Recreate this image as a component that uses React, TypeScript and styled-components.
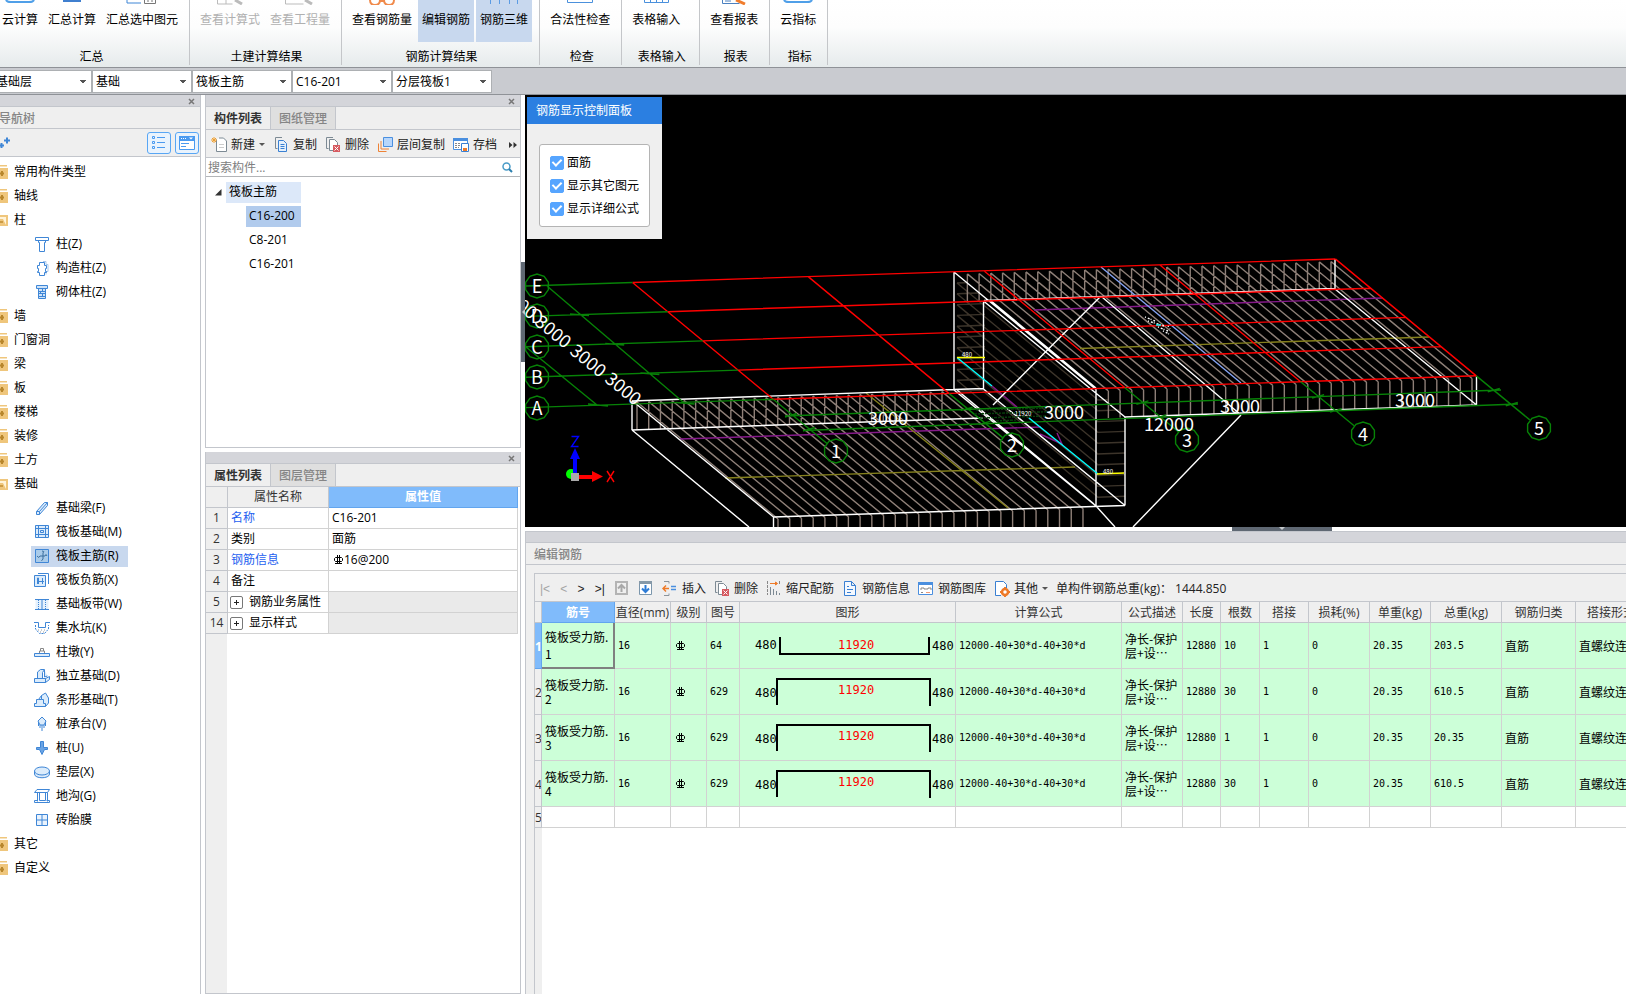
import React, { ReactNode, useState } from 'react';
import styled, { createGlobalStyle, css } from 'styled-components';

const UI_FONT = "'Open Sans', 'Noto Sans CJK SC', sans-serif";
const GRID_FONT = "'DejaVu Sans Mono', 'Noto Sans CJK SC', monospace";
const LINE = '#c3c6cc';
const PANEL = '#efefef';
const BLUE = '#3f86d6';

const GlobalStyle = createGlobalStyle`
  * { box-sizing: border-box; }
  body { margin: 0; background: #fff; font: 12px/16px ${UI_FONT}; color: #000; overflow-x: hidden; }
  button, select, input { font: inherit; color: inherit; }
  button { border: 0; padding: 0; background: none; white-space: nowrap; }
  ul { list-style: none; margin: 0; padding: 0; }
  svg { display: block; flex: none; }
`;

/* ---------- page frame ---------- */

const Page = styled.div`
  min-height: 100vh;
  display: flex;
  flex-direction: column;
  overflow: hidden;
`;
const Workspace = styled.main`
  flex: 1;
  display: flex;
`;

/* ---------- ribbon ---------- */

const Ribbon = styled.header`
  display: flex;
  height: 68px;
  padding-bottom: 2px;
  border-bottom: 1px solid #8f9297;
  background: linear-gradient(#fff 0%, #fdfdfd 40%, #e6ebec 100%);
  overflow: hidden;
`;
const RibbonGroups = styled.div`
  display: flex;
  margin-left: -8px;
`;
const RibbonGroup = styled.section<{ $min?: number }>`
  display: flex;
  flex-direction: column;
  padding: 0 6px 0 5px;
  min-width: ${(p) => (p.$min ? p.$min + 'px' : '0')};
  border-right: 1px solid #c4c6c9;
`;
const RibbonItems = styled.div`
  display: flex;
  flex: none;
  height: 42px;
`;
const RibbonLabel = styled.div`
  margin-top: 7px;
  padding-left: 3px;
  text-align: center;
`;
const RibbonButton = styled.button<{ $active?: boolean }>`
  display: flex;
  flex-direction: column;
  align-items: center;
  padding: 0 5px;
  color: #000;
  &:disabled { color: #b0b0b0; }
  svg { margin-bottom: 7px; }
  ${(p) => p.$active && css`
    padding: 0 4px;
    margin: 0 1px;
    background: #c8d8ee;
  `}
`;

const ribbonArt: Record<string, ReactNode> = {
  cloud: <path d="M6 0q1 2 5 2h18q4 0 5-2" fill="none" stroke="#4f9fe8" strokeWidth="2" />,
  sum: <path d="M11 0h18v2H11z" fill="#3f7fcf" />,
  pick: <><path d="M5 0v3h14" fill="none" stroke={BLUE} /><path d="M22.500 0v3.500h11V0M25 1h2m2 0h2" fill="none" stroke="#777" /></>,
  lookTable: <><path d="M7.500 0v4h15M16 0v4" fill="none" stroke="#bbb" /><path d="M25 0l7 4" stroke="#bbb" strokeWidth="3" /></>,
  lookArea: <><path d="M5.500 0v4h18" fill="none" stroke="#bbb" /><path d="M25 0l7 4" stroke="#bbb" strokeWidth="3" /></>,
  glasses: <path d="M8 0q0 5 5 5t5-5M22 0q0 5 5 5t5-5M18 1h4" fill="none" stroke="#f08a4b" strokeWidth="2" />,
  edit: null,
  bars: <path d="M6.500 0v4M15.500 0v4M25.500 0v4M33.500 0v4" stroke="#5a9be4" />,
  check: <path d="M7.500 0v2.500h25V0" fill="none" stroke="#4a90dc" />,
  grid: <path d="M8.500 0v2.500h24V0M14.500 0v2M20.500 0v2M26.500 0v2" fill="none" stroke="#4a90dc" strokeWidth="1" />,
  report: <><path d="M8.500 0v3.500h17M11 1h6" fill="none" stroke="#4a80c0" /><path d="M22 0l9 4" stroke="#f07c2c" strokeWidth="3" /></>,
};
const RibbonArt = ({ kind }: { kind: string }) => (
  <svg width="36" height="5" viewBox="2 0 36 5" aria-hidden="true">{ribbonArt[kind]}</svg>
);

type RibbonItem = { text: string; art: string; active?: boolean; disabled?: boolean };
const ribbon: { label: string; min?: number; items: RibbonItem[] }[] = [
  { label: '汇总', items: [{ text: '云计算', art: 'cloud' }, { text: '汇总计算', art: 'sum' }, { text: '汇总选中图元', art: 'pick' }] },
  { label: '土建计算结果', items: [{ text: '查看计算式', art: 'lookTable', disabled: true }, { text: '查看工程量', art: 'lookArea', disabled: true }] },
  { label: '钢筋计算结果', items: [{ text: '查看钢筋量', art: 'glasses' }, { text: '编辑钢筋', art: 'edit', active: true }, { text: '钢筋三维', art: 'bars', active: true }] },
  { label: '检查', items: [{ text: '合法性检查', art: 'check' }] },
  { label: '表格输入', min: 78, items: [{ text: '表格输入', art: 'grid' }] },
  { label: '报表', items: [{ text: '查看报表', art: 'report' }] },
  { label: '指标', items: [{ text: '云指标', art: 'cloud' }] },
];

/* ---------- selector bar ---------- */

const SelectorBar = styled.div`
  display: flex;
  height: 27px;
  padding-top: 2px;
  border-bottom: 1px solid #8f9297;
  background: #c9cbd0;
`;
const Selectors = styled.div`
  display: flex;
  margin-left: -8px;
`;
const Selector = styled.select`
  appearance: none;
  width: 100px;
  height: 23px;
  padding: 0 18px 0 3px;
  border: 1px solid #adb0b3;
  border-radius: 0;
  background:
    linear-gradient(to bottom right, #555 50%, transparent 51%) right 5px top 9px / 3px 3px no-repeat,
    linear-gradient(to bottom left, #555 50%, transparent 51%) right 8px top 9px / 3px 3px no-repeat,
    #fff;
`;

/* ---------- dock panels ---------- */

const Dock = styled.section<{ $width?: number; $grow?: boolean }>`
  display: flex;
  flex-direction: column;
  flex: ${(p) => (p.$grow ? '1' : 'none')};
  width: ${(p) => (p.$width ? p.$width + 'px' : 'auto')};
  min-width: 0;
`;
const NavDock = styled(Dock)`
  border-right: 1px solid ${LINE};
  margin-right: 4px;
`;
const MidColumn = styled.div`
  display: flex;
  flex-direction: column;
  gap: 4px;
  width: 316px;
  flex: none;
`;
const MidDock = styled(Dock)`
  border: 1px solid ${LINE};
  border-top: 0;
  background: #fff;
`;
const Strip = styled.div`
  display: flex;
  justify-content: flex-end;
  align-items: flex-end;
  flex: none;
  height: 12px;
  padding: 0 5px 1px 0;
  border-bottom: 1px solid ${LINE};
  background: #d4d5da;
`;
const CloseButton = styled.button`
  width: 7px;
  height: 7px;
`;
const StripWithClose = () => (
  <Strip>
    <CloseButton aria-label="关闭">
      <svg width="7" height="7" viewBox="0 0 7 7"><path d="M1 1l5 5M6 1L1 6" stroke="#777" strokeWidth="1.500" /></svg>
    </CloseButton>
  </Strip>
);
const DockTitle = styled.h2<{ $inset?: boolean }>`
  flex: none;
  height: 22px;
  margin: 0;
  padding-left: ${(p) => (p.$inset ? '8px' : '0')};
  border-bottom: 1px solid ${LINE};
  background: ${PANEL};
  color: #858585;
  font-size: 12px;
  font-weight: 500;
  line-height: 23px;
`;
const NavTitle = styled(DockTitle)`
  text-indent: -1px;
`;
const Tabs = styled.div`
  display: flex;
  flex: none;
  height: 23px;
  border-bottom: 1px solid ${LINE};
  background: ${PANEL};
`;
const Tab = styled.button<{ $active?: boolean }>`
  width: 65px;
  padding-top: 2px;
  border-right: 1px solid ${LINE};
  background: ${(p) => (p.$active ? PANEL : '#dfdfdf')};
  color: ${(p) => (p.$active ? '#333' : '#858585')};
  font-weight: ${(p) => (p.$active ? 700 : 500)};
`;
const ToolRow = styled.div`
  display: flex;
  align-items: center;
  flex: none;
  height: 28px;
  border-bottom: 1px solid ${LINE};
  background: ${PANEL};
  color: #222;
`;

/* ---------- navigation tree ---------- */

const NavTools = styled(ToolRow)`
  justify-content: flex-end;
  gap: 4px;
  padding-right: 1px;
`;
const AddMark = styled.button`
  margin-right: auto;
`;
const ViewToggle = styled.button`
  display: grid;
  place-items: center;
  width: 24px;
  height: 22px;
  border: 1px solid #58a6f4;
  border-radius: 3px;
  background: #e9f3fd;
`;
const NavTree = styled.ul`
  padding-top: 3px;
  margin-left: -8px;
`;
const NavRow = styled.li`
  display: flex;
  align-items: center;
  height: 24px;
`;
const NavGroup = styled.button`
  display: flex;
  align-items: center;
  gap: 6px;
`;
const NavItem = styled.button<{ $selected?: boolean }>`
  display: flex;
  align-items: center;
  gap: 6px;
  height: 21px;
  margin-left: 39px;
  padding: 0 9px 0 3px;
  background: ${(p) => (p.$selected ? '#c8d8ee' : 'transparent')};
`;

const Folder = ({ open }: { open?: boolean }) => (
  <svg width="16" height="16" viewBox="0 0 16 16" aria-hidden="true">
    {open ? (
      <><path d="M1 3h16v11H1z" fill="#efc67c" /><path d="M2 5h12v8l-3-6H2z" fill="#fff3d8" /><path d="M1 7h9l4 7H1z" fill="#efc67c" /><path d="M6 10h5" stroke="#c08c30" strokeWidth="1.500" /></>
    ) : (
      <><path d="M8 1h7v1.500H8z" fill="#efc67c" /><path d="M1 4h15v11H1z" fill="#efc67c" /><path d="M8 9.500h4M10 7v5" stroke="#b8862c" strokeWidth="2" /></>
    )}
  </svg>
);

const partArt: Record<string, ReactNode> = {
  column: <path d="M1.500 1.500h13v3h-3v2h-1v9h-5v-9h-1v-2h-3zM4 4.500h8" />,
  ringColumn: <><path d="M9 1.500h3v3h2v7h-2v3" stroke="#a9c8ec" /><path d="M5.500 2.500h5v3h2v3h-1v3h1v1h-2v3h-5v-3h-2v-1h1v-3h-1v-3h2z" /></>,
  brickColumn: <><path d="M4.500 4.500h7v10h-7z" fill="#cfe3f8" /><path d="M2.500 1.500h11v3h-11z" fill="#cfe3f8" /><path d="M5 7.500h6M5 9.500h6M5 12.500h6M8.500 5v2M6.500 8v1M8.500 10v2" /></>,
  beam: <><path d="M2.500 11.500l8-9h3v3l-8 9h-3z" fill="#dcecfb" /><path d="M2.500 11.500h3v3M5.500 11.500l8-9" /></>,
  raft: <path d="M1.500 1.500h13v12h-13zM4.500 1.500v12M11.500 1.500v12M1.500 4.500h13M1.500 10.500h13M6.500 6.500h3v2h-3z" fill="#dcecfb" />,
  mainBar: <><path d="M1.500 1.500h13v13h-13z" fill="#a9cbea" /><path d="M3 8q2 3 3 0h5q1-3 2 0M8 3q3 0 1 2v6q-2 2-1 2" stroke="#3b6f9e" /></>,
  negBar: <><path d="M4 1.500h10.500V12" /><path d="M.5 3.500h11v11H.5z" fill="#dcecfb" /><path d="M3.500 12V6h1v6M8.500 12V6M3 9.500h7" /></>,
  strip: <><path d="M1.500 3v11h13V3" fill="#e4f0fc" stroke="none" /><path d="M1 3.500h14M1 13.500h14M8 3v11" /><path d="M4.500 4v9M11.500 4v9" strokeDasharray="1 1" /></>,
  pit: <><path d="M0 2.500h4.500v5h7v-5H16" /><path d="M1.500 5v4l4 4.500h5l4-4.500V5" strokeDasharray="2 1" /><path d="M4 10h8M6 12h4" stroke="#999" strokeDasharray="1 2" /></>,
  pier: <><path d="M.5 9.500h15v3H.5z" fill="#dcecfb" /><path d="M5.500 9V7h5v2M6.500 7V4.500h3V7" stroke="#888" /></>,
  pad: <><path d="M.5 10.500h11v4H.5zM3.500 10.500V4l3-2.500h4l-2 3V10M11.500 10.500l4-2v3l-4 3zM10.500 2v7l3-1" fill="#dcecfb" /></>,
  stripPad: <><path d="M.5 14.500v-3h2v-4h2l3-4 4-2.500 3 5v5l-3 3.500z" fill="#dcecfb" /><path d="M7.500 3.500v4h2v4h2v3M4.500 7.500h3" /></>,
  cap: <path d="M8 1l4 4-2 4H6L4 5zM4.500 6v4M8 9v6M11.500 6v4M6 9v3M10 9v3" fill="#dcecfb" />,
  pile: <path d="M6.500 1.500h3v6h4v2h-3l-2.500 5-2.500-5h-3v-2h4z" fill="#6ba4e4" />,
  cushion: <><path d="M.5 7v3c0 5 15 5 15 0V7" fill="#dcecfb" /><ellipse cx="8" cy="7" rx="7.500" ry="4" fill="#dcecfb" /></>,
  trench: <path d="M3 1.500h12.500l-2 3H.5l2.500-3M3.500 4.500v9M5.500 4.500v8h6v-8M13.500 4.500v9M.5 14.500h15v-2h-3M.5 14.500v-2h3" />,
  brickMold: <path d="M2.500 2.500h11v11h-11zM8 2.500v11M2.500 8h11" fill="#eaf3fd" />,
};
const PartIcon = ({ kind }: { kind: string }) => (
  <svg width="16" height="16" viewBox="0 0 16 16" fill="none" stroke={BLUE} aria-hidden="true">{partArt[kind]}</svg>
);

type NavEntry = { name: string; open?: boolean; items?: [string, string][] };
const navigation: NavEntry[] = [
  { name: '常用构件类型' },
  { name: '轴线' },
  { name: '柱', open: true, items: [['柱(Z)', 'column'], ['构造柱(Z)', 'ringColumn'], ['砌体柱(Z)', 'brickColumn']] },
  { name: '墙' },
  { name: '门窗洞' },
  { name: '梁' },
  { name: '板' },
  { name: '楼梯' },
  { name: '装修' },
  { name: '土方' },
  {
    name: '基础', open: true, items: [
      ['基础梁(F)', 'beam'], ['筏板基础(M)', 'raft'], ['筏板主筋(R)', 'mainBar'], ['筏板负筋(X)', 'negBar'],
      ['基础板带(W)', 'strip'], ['集水坑(K)', 'pit'], ['柱墩(Y)', 'pier'], ['独立基础(D)', 'pad'],
      ['条形基础(T)', 'stripPad'], ['桩承台(V)', 'cap'], ['桩(U)', 'pile'], ['垫层(X)', 'cushion'],
      ['地沟(G)', 'trench'], ['砖胎膜', 'brickMold'],
    ],
  },
  { name: '其它' },
  { name: '自定义' },
];

/* ---------- tool icons ---------- */

const toolArt: Record<string, ReactNode> = {
  create: <><path d="M5.500 3.500V15.500h10V5l-3-3H8" stroke="#7d8a94" fill="#fff" /><path d="M8 8.500h5M8 11.500h5" stroke="#ccc" /><path d="M1 2l4 4M5 2L1 6M3 1v6M0 4h6" stroke="#f0a030" /></>,
  copy: <><path d="M9 1.500H2.500v11h2" stroke="#7d8a94" /><path d="M5.500 4.500h5l3 3v8h-8zM7.500 8.500h4M7.500 10.500h4M7.500 12.500h4" stroke="#3a80d2" fill="#e6f1fc" /></>,
  remove: <><path d="M8 1.500H1.500v11h2" stroke="#7d8a94" /><path d="M4.500 3.500h5l3 3v8h-8z" stroke="#7d8a94" fill="#fff" /><path d="M8 9h7v7H8z" fill="#d65a60" stroke="none" /><path d="M9.500 10.500l4 4M13.500 10.500l-4 4" stroke="#fff" /></>,
  layer: <><path d="M6.500 1.500h9v9h-9z" fill="#b7d6fb" stroke="#4a8fdf" /><path d="M4 5v8h8M1.500 7.500v8h8" stroke="#ee8236" /></>,
  archive: <><path d="M.5 2.500h14v11H.5z" stroke="#4a8fdf" fill="#fff" /><path d="M0 2h15v3H0z" fill="#4a8fdf" stroke="none" /><path d="M2 7.500h5M2 9.500h5M2 11.500h4" stroke="#888" strokeDasharray="2 1" /><path d="M8.500 7.500h7v8h-7z" stroke="#3a80d2" fill="#fff" /><path d="M10 12h4v3h-4z" fill="#ee7a28" stroke="none" /></>,
  moveUp: <><path d="M1 1h13v14H1z" fill="#b4b4b4" stroke="none" /><path d="M3 3h9v10H3z" fill="#efefef" stroke="none" /><path d="M7.500 12V5M4 8.500L7.500 5 11 8.500" stroke="#a8a8a8" strokeWidth="2" /></>,
  moveDown: <><path d="M1.500 1.500h12v13h-12z" stroke="#7b96ac" fill="#fff" /><path d="M1 1h13v3H1z" fill="#8699a8" stroke="none" /><path d="M7.500 5v7M4 8.500L7.500 12 11 8.500" stroke="#2d7cd6" strokeWidth="2" /></>,
  insert: <><path d="M2 1.500h5v2M2 15.500h5v-2" stroke="#8a949c" /><path d="M7 8.500H1M4 5.500l-3 3 3 3" stroke="#ee7a28" strokeWidth="1.500" /><path d="M9 6.500h5M9 9.500h5" stroke="#4a8fdf" strokeWidth="1.500" /></>,
  scale: <><path d="M4 3.500h6M9.500 2v3l2-1.500z" stroke="#ee7a28" fill="#ee7a28" /><path d="M1.500 1v14M13.500 1v3" stroke="#888" strokeDasharray="3 1" /><path d="M4.500 7v8M7.500 9v6M10.500 11v4M13.500 13v2" stroke="#7d8a94" /></>,
  info: <path d="M2.500 1.500h7l4 4v10h-11zM9.500 1.500v4h4M5 6.500h2M5 9.500h6M5 12.500h4" stroke="#3a80d2" fill="#f4f9ff" />,
  library: <><path d="M.5 2.500h14v12H.5z" stroke="#4a8fdf" fill="#fff" /><path d="M0 2h15v3H0z" fill="#4a8fdf" stroke="none" /><path d="M3 10V8h3v1h4V8h3v2M3 12.500h2" stroke="#888" /><path d="M8 12.500h4" stroke="#ee9a78" /></>,
  other: <><path d="M7 15.500H1.500v-14h8l3 3V8" stroke="#3a80d2" fill="#fff" /><circle cx="11" cy="12" r="3" stroke="#ee7a28" strokeWidth="2.500" fill="#fff" /><path d="M11 7v2M11 15v2M6 12h2M14 12h2" stroke="#ee7a28" strokeWidth="2" /></>,
};
const ToolIcon = ({ kind }: { kind: string }) => (
  <svg width="16" height="17" viewBox="0 0 16 17" fill="none" aria-hidden="true">{toolArt[kind]}</svg>
);
const Caret = () => (
  <svg width="6" height="4" viewBox="0 0 6 4" aria-hidden="true"><path d="M0 0h6L3 3z" fill="#555" /></svg>
);
const ToolButton = styled.button`
  display: flex;
  align-items: center;
  gap: 4px;
  color: #222;
`;

/* ---------- component list ---------- */

const ListTools = styled(ToolRow)`
  gap: 8px;
  padding: 2px 3px 0 5px;
`;
const MoreButton = styled.button`
  margin-left: auto;
`;
const SearchRow = styled.label`
  display: flex;
  align-items: center;
  flex: none;
  height: 19px;
  padding: 0 7px 0 2px;
  border-bottom: 1px solid #b3b5b8;
`;
const SearchInput = styled.input`
  flex: 1;
  min-width: 0;
  height: 18px;
  padding: 0;
  border: 0;
  outline: 0;
  background: transparent;
  &::placeholder { color: #808080; opacity: 1; }
`;
const ComponentTree = styled.ul`
  height: 270px;
  padding-top: 3px;
`;
const ComponentRow = styled.li<{ $level: number }>`
  display: flex;
  align-items: center;
  height: 24px;
  padding-left: ${(p) => (p.$level ? '40px' : '9px')};
  gap: 4px;
`;
const ComponentName = styled.button<{ $tone?: string; $wide?: boolean }>`
  height: 21px;
  min-width: ${(p) => (p.$wide ? '75px' : '55px')};
  padding: 0 3px;
  text-align: left;
  background: ${(p) => p.$tone || 'transparent'};
`;

/* ---------- property table ---------- */

const PropertyArea = styled.div`
  flex: 1;
  background: linear-gradient(to right, ${PANEL} 21px, #fff 21px);
`;
const PropertyTable = styled.table`
  width: 312px;
  border-collapse: separate;
  border-spacing: 0;
  table-layout: fixed;
`;
const PropHead = styled.th<{ $current?: boolean }>`
  height: 21px;
  padding: 0;
  border-right: 1px solid ${LINE};
  border-bottom: 1px solid ${LINE};
  background: ${PANEL};
  color: #333;
  font-weight: 400;
  ${(p) => p.$current && css`
    border-color: #62a5ee;
    background: #80bbfb;
    color: #fff;
    font-weight: 700;
  `}
`;
const PropCell = styled.td<{ $link?: boolean; $shade?: boolean }>`
  height: 21px;
  padding: 0 3px;
  border-right: 1px solid #d2d2d2;
  border-bottom: 1px solid #d2d2d2;
  background: ${(p) => (p.$shade ? '#eaeaea' : '#fff')};
  color: ${(p) => (p.$link ? '#1e5ff0' : '#000')};
  white-space: nowrap;
`;
const Inline = styled.span`
  display: flex;
  align-items: center;
  gap: 6px;
`;
const RebarValue = styled(Inline)`
  gap: 1px;
  padding-left: 2px;
`;
const ExpandBox = styled.button`
  display: grid;
  place-items: center;
  width: 13px;
  height: 13px;
  margin-left: -1px;
  border: 1px solid #777;
  border-radius: 2px;
  background: #fff;
`;
const RebarMark = () => (
  <svg width="9" height="10" viewBox="0 0 9 10" fill="none" stroke="#000" role="img" aria-label="HRB400">
    <path d="M1.500 2.500h6l1 1v2l-1 1h-6l-1-1v-2zM3.500 0v9M5.500 0v9M1 8.500h7" />
  </svg>
);

/* ---------- splitters ---------- */

const ColumnSplitter = styled.div`
  flex: none;
  width: 4px;
  padding-top: 167px;
`;
const RowSplitter = styled.div`
  flex: none;
  height: 4px;
  padding-left: 707px;
`;
const ColumnGrip = styled.button`
  display: grid;
  place-items: center;
  width: 4px;
  height: 100px;
  background: #5f6873;
`;
const RowGrip = styled.button`
  display: grid;
  place-items: start center;
  width: 100px;
  height: 4px;
  background: #5f6873;
`;

/* ---------- 3D view ---------- */

const View = styled.div`
  position: relative;
  flex: none;
  height: 432px;
  background: #000;
  overflow: hidden;
`;
const ControlPanel = styled.form`
  position: absolute;
  left: 2px;
  top: 2px;
  width: 135px;
  padding-bottom: 12px;
  background: ${PANEL};
`;
const ControlTitle = styled.h2`
  margin: 0 0 20px;
  padding-left: 9px;
  background: #2b7fe1;
  color: #fff;
  font-size: 12px;
  font-weight: 400;
  line-height: 27px;
`;
const ControlBox = styled.div`
  margin: 0 12px;
  padding: 6px 0 6px 10px;
  border: 1px solid #b4b4b4;
  border-radius: 3px;
  background: #fff;
`;
const CheckLabel = styled.label`
  display: flex;
  align-items: center;
  gap: 3px;
  height: 23px;
  white-space: nowrap;
`;
const CheckInput = styled.input`
  appearance: none;
  display: grid;
  place-items: center;
  width: 14px;
  height: 14px;
  margin: 0;
  border: 1px solid #56a5ff;
  border-radius: 2px;
  &:checked { background: #56a5ff; }
  &:checked::before {
    content: '';
    width: 4px;
    height: 7px;
    margin-bottom: 2px;
    border: solid #fff;
    border-width: 0 2px 2px 0;
    rotate: 45deg;
  }
`;

type Seg = [number, number, number, number];
const toPath = (segs: Seg[]) => segs.map(([a, b, c, d]) => `M${a} ${b}L${c} ${d}`).join('');
const range = (n: number) => Array.from({ length: n }, (_, i) => i);

/* Projection of the 12 m x 12 m grid: one bay runs 176 px across and 35 px down-right. */
const PITCH = 11.73;
const SLOPE = -0.0341;
const DIAG: [number, number] = [141, 117];

const redLines: Seg[] = [
  ...range(5).map((i): Seg => [632.5 + 35.2 * i, 282.5 + 29.2 * i, 1335 + 35.4 * i, 259 + 29.2 * i]),
  ...range(5).map((i): Seg => [632.5 + 175.7 * i, 282.5 - 5.9 * i, 773.5 + 175.7 * i, 399.5 - 5.9 * i]),
];
const greenLines: Seg[] = [
  ...range(5).map((i): Seg => [526, 286 + 30.4 * i, 632.5 + 35.2 * i, 282.5 + 29.2 * i]),
  [547, 286, 683, 402], [526, 347, 597, 405],
  [785, 416, 1501, 390], [803, 430.5, 1518, 404],
  ...range(5).map((i): Seg => [773.5 + 175.7 * i, 399.5 - 5.9 * i, 827 + 175.7 * i, 443.5 - 5.9 * i]),
  ...range(5).map((i): Seg => [785 + 175.7 * i, 417 - 6.3 * i, 797 + 175.7 * i, 413.5 - 6.3 * i]),
  ...range(5).map((i): Seg => [803 + 175.7 * i, 431 - 6.3 * i, 815 + 175.7 * i, 427.5 - 6.3 * i]),
  ...range(4).map((i): Seg => [570 + 35.2 * i, 314 + 29.5 * i, 589 + 35.2 * i, 315.5 + 29.5 * i]),
  [588, 404, 608, 406],
];
const lowerBars: Seg[] = range(27).flatMap((k): Seg[] => {
  const x = 637 + PITCH * k;
  const y = 402 + SLOPE * PITCH * k;
  return [[x, y, x, y + 28], [x, y, x + DIAG[0], y + DIAG[1]], [x + DIAG[0], y + DIAG[1], x + DIAG[0], y + DIAG[1] + 29]];
});
const upperBars: Seg[] = range(32).flatMap((k): Seg[] => {
  const x = 1331 - PITCH * k;
  const y = 261.5 - SLOPE * PITCH * k;
  return [[x, y, x, y + 27], [x, y, x + DIAG[0], y + DIAG[1]], [x + DIAG[0], y + DIAG[1], x + DIAG[0], y + DIAG[1] + 27]];
});
const wallBars: Seg[] = range(11).flatMap((k): Seg[] => {
  const y = 283 + 10.8 * k;
  return [
    [957, y, 985, y - 1],
    [957, y, 957 + DIAG[0], y + DIAG[1]],
    [1097, y + DIAG[1], 1125, y + DIAG[1] - 1],
  ];
});
const outline: Seg[] = [
  [954, 272, 954, 389.5], [983.5, 301, 983.5, 389], [954, 389.5, 983.5, 388.5],
  [954, 272, 1096, 389.5], [983.5, 301, 1125, 417], [990, 300, 1096, 388],
  [984, 300.5, 1335, 288.5], [1335, 259, 1335, 289], [1335, 289, 1476.5, 405],
  [1476.5, 376, 1476.5, 405], [1125, 417, 1476.5, 405],
  [1096, 389, 1096, 506], [1125, 417, 1125, 505.5],
  [954, 390, 1096, 506], [957, 390, 1094, 504], [983.5, 389, 1125, 505.5], [1096, 506, 1115, 527],
  [632, 401, 954, 389.5], [632, 401, 632, 430], [632, 430, 983, 418], [632, 400.5, 773.5, 517],
  [632, 430, 749, 527], [773.5, 517, 1125, 505.5], [773.5, 517, 773.5, 527],
  [1100, 297, 993, 405], [1102, 297, 1241, 415], [1241, 415, 1133, 527],
];
const bubbles: [string, number, number][] = [
  ['E', 537, 286], ['D', 537, 316], ['C', 537, 347], ['B', 537, 377], ['A', 537, 408],
  ['1', 836, 451], ['2', 1012, 445], ['3', 1187, 440], ['4', 1363, 434], ['5', 1539, 428],
];
const decagon = (cx: number, cy: number) =>
  range(10).map((i) => {
    const a = (Math.PI / 5) * i + Math.PI / 10;
    return `${(cx + 12 * Math.cos(a)).toFixed(1)},${(cy + 12 * Math.sin(a)).toFixed(1)}`;
  }).join(' ');
const spans: [string, number, number, number][] = [
  ['3000', 519, 303, 39], ['3000', 553, 332, 39], ['3000', 588, 361, 39], ['3000', 623, 389, 39],
  ['3000', 888, 419, 0], ['3000', 1064, 413, 0], ['12000', 1169, 425, 0], ['3000', 1240, 407, 0], ['3000', 1415, 401, 0],
];

const Scene = styled.svg`
  width: 100%;
  height: 432px;
  fill: none;
  path, polygon { stroke-width: 1.4; }
  text {
    fill: #fff;
    font-family: 'Noto Sans CJK SC', sans-serif;
    font-weight: 400;
    text-anchor: middle;
  }
`;

const RaftScene = () => (
  <Scene role="img" aria-label="筏板钢筋三维视图">
    <defs>
      <clipPath id="wall"><path d="M954 272V390L1096 506H1126V416L1096 389Z" /></clipPath>
      <clipPath id="lower"><path d="M632 400L954 389L1096 505V527H632Z" /></clipPath>
    </defs>
    <g transform="translate(-525 -95)">
      <path d={toPath(wallBars)} stroke="#3c342a" clipPath="url(#wall)" />
      <path d={toPath(lowerBars)} stroke="#8e7f77" clipPath="url(#lower)" />
      <path d={toPath(upperBars)} stroke="#8e7f77" />
      <path d="M680 439L1041 427M1034 310L1383 298M992 386L1018 408M1040 434L1062 444L1057 433" stroke="#86198a" />
      <path d="M725 478L1075 467M1080 348.500L1429 337M866 393L1008 508" stroke="#85801c" />
      <path d={toPath(outline)} stroke="#fff" />
      <path d="M1101 267L1241 383" stroke="#86a4f4" />
      <path d={toPath(redLines)} stroke="#f00" />
      <path d={toPath(greenLines)} stroke="#078207" />
      <path d="M976 410l70-2M974 414l98-3M980 418l66-2M996 421l20-1" stroke="#07400c" strokeDasharray="3 1 2 1" />
      <path d="M957 357.500L992 386M1029 418L1098 474" stroke="#0ff" />
      <path d="M957 357.500h28M1097 474l27-1" stroke="#ff0" />
      <path d="M1145 317l10 4M1148 321l16 5M1158 327l10 4M1163 331l6 3M1168 326l2 3" stroke="#fff" strokeDasharray="1 2 2 1" />
      <path d="M1156 325h5" stroke="#0ff" />
      <text x="967" y="357" fontSize="6">480</text>
      <text x="1108" y="474" fontSize="6">480</text>
      <text x="1023" y="416" fontSize="6">11920</text>
      {bubbles.map(([name, x, y]) => (
        <g key={name}>
          <polygon points={decagon(x, y)} stroke="#078207" />
          <text x={x} y={y + 7} fontSize="18">{name}</text>
        </g>
      ))}
      {spans.map(([value, x, y, turn]) => (
        <text key={x} x={x} y={y + 6} fontSize="18" transform={`rotate(${turn} ${x} ${y})`}>{value}</text>
      ))}
      <circle cx="571" cy="474" r="5" fill="#0f0" />
      <path d="M573 458h4v16h-4zM575 448l5 11h-10z" fill="#00f" />
      <path d="M579 475h14v4h-14zM592 471l11 5.500-11 5.500z" fill="#f00" />
      <path d="M571 473h8v8h-8z" fill="#aaa" />
      <path d="M571.500 436.500h7l-7 10h7" stroke="#00f" />
      <path d="M607 471l7 11M614 471l-7 11" stroke="#f00" />
    </g>
  </Scene>
);

/* ---------- rebar editor ---------- */

const Editor = styled.section`
  display: flex;
  flex-direction: column;
  flex: 1;
  border-left: 1px solid ${LINE};
  border-top: 1px solid ${LINE};
  background: ${PANEL};
`;
const EditorStrip = styled(Strip)`
  height: 11px;
`;
const EditorFrame = styled.div`
  display: flex;
  flex-direction: column;
  flex: 1;
  margin: 8px 0 0 8px;
  border-left: 1px solid ${LINE};
  border-top: 1px solid ${LINE};
  overflow: hidden;
`;
const EditorTools = styled(ToolRow)`
  gap: 8px;
  padding: 2px 0 0 5px;
  white-space: nowrap;
`;
const Stepper = styled.div`
  display: flex;
  width: 65px;
  justify-content: space-between;
  margin-right: 1px;
`;
const StepButton = styled.button`
  color: #222;
  font-family: 'Liberation Sans', sans-serif;
  &:disabled { color: #a4a4a4; }
`;
const GridArea = styled.div`
  flex: 1;
  background: linear-gradient(to right, ${PANEL} 7px, #fff 7px);
`;
const GridTable = styled.table`
  width: 1112px;
  border-collapse: separate;
  border-spacing: 0;
  table-layout: fixed;
`;
const GridHead = styled(PropHead)`
  padding-top: 1px;
  line-height: 15px;
  white-space: nowrap;
  overflow: hidden;
`;
const Cell = styled.td<{ $filled?: boolean; $mixed?: boolean }>`
  height: ${(p) => (p.$filled ? '46px' : '21px')};
  padding: 0 0 0 3px;
  border-right: 1px solid #d2d2d2;
  border-bottom: 1px solid #d2d2d2;
  background: ${(p) => (p.$filled ? '#ccffd8' : '#fff')};
  font-family: ${(p) => (p.$mixed ? "'Noto Sans CJK SC', sans-serif" : GRID_FONT)};
  font-size: ${(p) => (p.$mixed ? '12px' : '10px')};
  line-height: 14px;
  white-space: nowrap;
  overflow: hidden;
`;
const CurrentCell = styled(Cell)`
  border-right: 2px solid #808080;
  border-bottom: 2px solid #808080;
  line-height: 17px;
`;
const MarkCell = styled(Cell)`
  padding-left: 5px;
`;
const DrawingCell = styled(Cell)`
  padding: 0;
  text {
    font-family: ${GRID_FONT};
    font-size: 12px;
  }
`;

const BarShape = ({ up }: { up: boolean }) => (
  <svg width="215" height="45" role="img" aria-label="钢筋图形">
    <path d={up ? 'M40 14V31H189V14' : 'M37 36V10H190V37'} fill="none" stroke="#000" strokeWidth="2" />
    <text x="15" y={up ? 26 : 28}>480</text>
    <text x="98" y={up ? 26 : 25} fill="#f00">11920</text>
    <text x="192" y={up ? 27 : 28}>480</text>
  </svg>
);

const columns: [string, number][] = [
  ['筋号', 73], ['直径(mm)', 56], ['级别', 36], ['图号', 33], ['图形', 216], ['计算公式', 166], ['公式描述', 61],
  ['长度', 38], ['根数', 39], ['搭接', 49], ['损耗(%)', 61], ['单重(kg)', 61], ['总重(kg)', 71], ['钢筋归类', 74], ['搭接形式', 71],
];
const bars = [
  { shape: '64', count: '10', total: '203.5' },
  { shape: '629', count: '30', total: '610.5' },
  { shape: '629', count: '1', total: '20.35' },
  { shape: '629', count: '30', total: '610.5' },
];

const properties: { no: number; name: string; value?: ReactNode; link?: boolean; group?: boolean }[] = [
  { no: 1, name: '名称', value: 'C16-201', link: true },
  { no: 2, name: '类别', value: '面筋' },
  { no: 3, name: '钢筋信息', value: <RebarValue><RebarMark />16@200</RebarValue>, link: true },
  { no: 4, name: '备注' },
  { no: 5, name: '钢筋业务属性', group: true },
  { no: 14, name: '显示样式', group: true },
];

export default function App() {
  const [part, setPart] = useState('筏板主筋(R)');
  return (
    <Page>
      <GlobalStyle />
      <Ribbon>
        <RibbonGroups>
          {ribbon.map((g) => (
            <RibbonGroup key={g.label} $min={g.min}>
              <RibbonItems>
                {g.items.map((it) => (
                  <RibbonButton key={it.text} $active={it.active} disabled={it.disabled}>
                    <RibbonArt kind={it.art} />
                    {it.text}
                  </RibbonButton>
                ))}
              </RibbonItems>
              <RibbonLabel>{g.label}</RibbonLabel>
            </RibbonGroup>
          ))}
        </RibbonGroups>
      </Ribbon>

      <SelectorBar>
        <Selectors>
          {[['楼层', '基础层'], ['类别', '基础'], ['构件类型', '筏板主筋'], ['构件', 'C16-201'], ['分层', '分层筏板1']].map(([label, v]) => (
            <Selector key={label} aria-label={label}><option>{v}</option></Selector>
          ))}
        </Selectors>
      </SelectorBar>

      <Workspace>
        <NavDock $width={201} as="nav">
          <StripWithClose />
          <NavTitle>导航树</NavTitle>
          <NavTools>
            <AddMark aria-label="添加">
              <svg width="11" height="12" viewBox="0 0 11 12"><path d="M0 8.500h4M1.500 6v5M4 3.500h6M7 .5v6" stroke={BLUE} strokeWidth="2" /></svg>
            </AddMark>
            <ViewToggle aria-label="列表视图">
              <svg width="14" height="14" viewBox="0 0 14 14" fill="none" stroke="#4a9af0"><path d="M.5.5h2v2h-2zM.5 5.500h2v2h-2zM.5 10.500h2v2h-2zM5 1.500h8M5 6.500h8M5 11.500h8" /></svg>
            </ViewToggle>
            <ViewToggle aria-label="图标视图">
              <svg width="16" height="14" viewBox="0 0 16 14" fill="none"><path d="M.5.500h15v13H.5z" stroke="#4a9af0" fill="#fff" /><path d="M0 0h16v5H0z" fill="#4a9af0" /><path d="M2 2.500h5" stroke="#fff" strokeDasharray="1 1" /><path d="M10 1.500h4l-2 2z" fill="#fff" /><path d="M2 7.500h8M2 10.500h5" stroke="#4a9af0" /></svg>
            </ViewToggle>
          </NavTools>
          <NavTree>
            {navigation.map((g) => (
              <React.Fragment key={g.name}>
                <NavRow><NavGroup><Folder open={g.open} />{g.name}</NavGroup></NavRow>
                {g.items?.map(([name, kind]) => (
                  <NavRow key={name}>
                    <NavItem $selected={name === part} onClick={() => setPart(name)}><PartIcon kind={kind} />{name}</NavItem>
                  </NavRow>
                ))}
              </React.Fragment>
            ))}
          </NavTree>
        </NavDock>

        <MidColumn>
          <MidDock>
            <StripWithClose />
            <Tabs><Tab $active>构件列表</Tab><Tab>图纸管理</Tab></Tabs>
            <ListTools>
              <ToolButton><ToolIcon kind="create" />新建<Caret /></ToolButton>
              <ToolButton><ToolIcon kind="copy" />复制</ToolButton>
              <ToolButton><ToolIcon kind="remove" />删除</ToolButton>
              <ToolButton><ToolIcon kind="layer" />层间复制</ToolButton>
              <ToolButton><ToolIcon kind="archive" />存档</ToolButton>
              <MoreButton aria-label="更多">
                <svg width="8" height="6" viewBox="0 0 8 6"><path d="M0 0l3.500 3L0 6zM4.500 0L8 3 4.500 6z" fill="#333" /></svg>
              </MoreButton>
            </ListTools>
            <SearchRow>
              <SearchInput placeholder="搜索构件..." aria-label="搜索构件" />
              <svg width="11" height="11" viewBox="0 0 11 11" fill="none"><circle cx="4.500" cy="4.500" r="3.500" stroke="#4a9cc8" strokeWidth="1.500" /><path d="M7 7l3 3" stroke="#2b7fae" strokeWidth="2" /></svg>
            </SearchRow>
            <ComponentTree>
              <ComponentRow $level={0}>
                <svg width="7" height="7" viewBox="0 0 7 7"><path d="M6.500 0v6.500H0z" fill="#333" /></svg>
                <ComponentName $tone="#dce8f9" $wide>筏板主筋</ComponentName>
              </ComponentRow>
              <ComponentRow $level={1}><ComponentName $tone="#b1cbed">C16-200</ComponentName></ComponentRow>
              <ComponentRow $level={1}><ComponentName>C8-201</ComponentName></ComponentRow>
              <ComponentRow $level={1}><ComponentName>C16-201</ComponentName></ComponentRow>
            </ComponentTree>
          </MidDock>
          <MidDock $grow>
            <StripWithClose />
            <Tabs><Tab $active>属性列表</Tab><Tab>图层管理</Tab></Tabs>
            <PropertyArea>
              <PropertyTable>
                <colgroup><col width={22} /><col width={101} /><col width={189} /></colgroup>
                <thead>
                  <tr><PropHead aria-label="序号" /><PropHead>属性名称</PropHead><PropHead $current>属性值</PropHead></tr>
                </thead>
                <tbody>
                  {properties.map((p) => (
                    <tr key={p.no}>
                      <PropHead scope="row">{p.no}</PropHead>
                      <PropCell $link={p.link}>
                        {p.group ? (
                          <Inline>
                            <ExpandBox aria-label={'展开' + p.name}>
                              <svg width="7" height="7" viewBox="0 0 7 7"><path d="M1 3.500h5M3.500 1v5" stroke="#222" /></svg>
                            </ExpandBox>
                            {p.name}
                          </Inline>
                        ) : p.name}
                      </PropCell>
                      <PropCell $shade={p.group}>{p.value}</PropCell>
                    </tr>
                  ))}
                </tbody>
              </PropertyTable>
            </PropertyArea>
          </MidDock>
        </MidColumn>

        <ColumnSplitter>
          <ColumnGrip aria-label="折叠左侧面板">
            <svg width="3" height="6" viewBox="0 0 3 6"><path d="M3 0v6L0 3z" fill="#c4c8cc" /></svg>
          </ColumnGrip>
        </ColumnSplitter>

        <Dock $grow>
          <View>
            <RaftScene />
            <ControlPanel>
              <ControlTitle>钢筋显示控制面板</ControlTitle>
              <ControlBox>
                {['面筋', '显示其它图元', '显示详细公式'].map((t) => (
                  <CheckLabel key={t}><CheckInput type="checkbox" defaultChecked />{t}</CheckLabel>
                ))}
              </ControlBox>
            </ControlPanel>
          </View>
          <RowSplitter>
            <RowGrip aria-label="折叠下方面板">
              <svg width="6" height="3" viewBox="0 0 6 3"><path d="M0 0h6L3 3z" fill="#c4c8cc" /></svg>
            </RowGrip>
          </RowSplitter>
          <Editor>
            <EditorStrip />
            <DockTitle $inset>编辑钢筋</DockTitle>
            <EditorFrame>
              <EditorTools>
                <Stepper>
                  <StepButton disabled aria-label="首条">|&lt;</StepButton>
                  <StepButton disabled aria-label="上一条">&lt;</StepButton>
                  <StepButton aria-label="下一条">&gt;</StepButton>
                  <StepButton aria-label="末条">&gt;|</StepButton>
                </Stepper>
                <ToolButton aria-label="上移"><ToolIcon kind="moveUp" /></ToolButton>
                <ToolButton aria-label="下移"><ToolIcon kind="moveDown" /></ToolButton>
                <ToolButton><ToolIcon kind="insert" />插入</ToolButton>
                <ToolButton><ToolIcon kind="remove" />删除</ToolButton>
                <ToolButton><ToolIcon kind="scale" />缩尺配筋</ToolButton>
                <ToolButton><ToolIcon kind="info" />钢筋信息</ToolButton>
                <ToolButton><ToolIcon kind="library" />钢筋图库</ToolButton>
                <ToolButton><ToolIcon kind="other" />其他<Caret /></ToolButton>
                <span>单构件钢筋总重(kg)： 1444.850</span>
              </EditorTools>
              <GridArea>
                <GridTable>
                  <colgroup>
                    <col width={7} />
                    {columns.map(([name, w]) => <col key={name} width={w} />)}
                  </colgroup>
                  <thead>
                    <tr>
                      <GridHead aria-label="序号" />
                      {columns.map(([name], i) => <GridHead key={name} $current={i === 0}>{name}</GridHead>)}
                    </tr>
                  </thead>
                  <tbody>
                    {bars.map((b, i) => {
                      const Name = i === 0 ? CurrentCell : Cell;
                      return (
                        <tr key={i}>
                          <GridHead scope="row" $current={i === 0}>{i + 1}</GridHead>
                          <Name $filled $mixed>筏板受力筋.<br />{i + 1}</Name>
                          <Cell $filled>16</Cell>
                          <MarkCell $filled><RebarMark /></MarkCell>
                          <Cell $filled>{b.shape}</Cell>
                          <DrawingCell $filled><BarShape up={i === 0} /></DrawingCell>
                          <Cell $filled>12000-40+30*d-40+30*d</Cell>
                          <Cell $filled $mixed>净长-保护<br />层+设…</Cell>
                          <Cell $filled>12880</Cell>
                          <Cell $filled>{b.count}</Cell>
                          <Cell $filled>1</Cell>
                          <Cell $filled>0</Cell>
                          <Cell $filled>20.35</Cell>
                          <Cell $filled>{b.total}</Cell>
                          <Cell $filled $mixed>直筋</Cell>
                          <Cell $filled $mixed>直螺纹连接</Cell>
                        </tr>
                      );
                    })}
                    <tr>
                      <GridHead scope="row">5</GridHead>
                      {columns.map(([name]) => <Cell key={name} />)}
                    </tr>
                  </tbody>
                </GridTable>
              </GridArea>
            </EditorFrame>
          </Editor>
        </Dock>
      </Workspace>
    </Page>
  );
}
